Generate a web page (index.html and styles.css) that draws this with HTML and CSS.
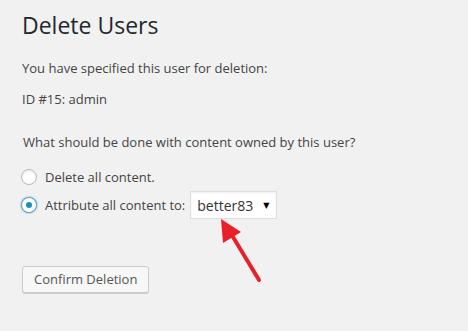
FILE: index.html
```html
<!DOCTYPE html>
<html>
<head>
<meta charset="utf-8">
<link rel="stylesheet" href="styles.css">
</head>
<body>
<div class="wrap">
  <h1 class="title">Delete Users</h1>
  <p class="text first">You have specified this user for deletion:</p>
  <p class="text">ID #15: admin</p>
  <fieldset class="options">
    <p class="text legend">What should be done with content owned by this user?</p>
    <div class="choice">
      <span class="radio"></span>
      <span class="label">Delete all content.</span>
    </div>
    <div class="choice">
      <span class="radio checked"></span>
      <span class="label">Attribute all content to:</span>
      <span class="select"><span class="select-text">better83</span><span class="caret">&#9660;</span></span>
    </div>
  </fieldset>
  <div class="actions">
    <span class="button">Confirm Deletion</span>
  </div>
</div>
<svg class="arrow" width="468" height="331" viewBox="0 0 468 331">
  <line x1="259" y1="280" x2="230" y2="232" stroke="#e8202a" stroke-width="4" stroke-linecap="round"/>
  <polygon points="221,219 241,232 223,243" fill="#e8202a"/>
</svg>
</body>
</html>
```
FILE: styles.css
```css
html, body {
  margin: 0;
  padding: 0;
  background: #f1f1f1;
}
body {
  font-family: "Open Sans", "Liberation Sans", sans-serif;
  font-size: 13px;
  color: #444;
  width: 468px;
  height: 331px;
  overflow: hidden;
  position: relative;
}
.wrap {
  padding: 10px 22px 0 22px;
}
.title {
  margin: 0;
  font-size: 23px;
  font-weight: 400;
  line-height: 30px;
  color: #23282d;
}
.text {
  margin: 0;
  line-height: 19px;
}
.first {
  margin-top: 19px;
}
.text + .text {
  margin-top: 12px;
}
.options {
  border: 0;
  margin: 24px 0 0 0;
  padding: 0;
}
.legend {
  margin-bottom: 11px;
  padding-left: 1px;
}
.choice {
  display: flex;
  align-items: center;
  height: 28px;
  margin-left: -1px;
}
.radio {
  box-sizing: border-box;
  width: 16px;
  height: 16px;
  border-radius: 50%;
  border: 1px solid #b4b9be;
  background: #fff;
  box-shadow: inset 0 1px 2px rgba(0,0,0,.1);
  margin-right: 8px;
  display: flex;
  align-items: center;
  justify-content: center;
}
.radio.checked {
  border-color: #5b9dd9;
  box-shadow: 0 0 2px rgba(30,140,190,.8);
}
.radio.checked::after {
  content: "";
  width: 6px;
  height: 6px;
  border-radius: 50%;
  background: #1e8cbe;
}
.label {
  line-height: 19px;
}
.select {
  box-sizing: border-box;
  margin-left: 5px;
  width: 87px;
  height: 28px;
  background: #fff;
  border: 1px solid #ddd;
  box-shadow: inset 0 1px 2px rgba(0,0,0,.07);
  display: flex;
  align-items: center;
  justify-content: space-between;
  padding: 0 7px 0 6px;
  color: #333;
}
.select-text {
  font-size: 14px;
}
.caret {
  font-family: "DejaVu Sans", sans-serif;
  font-size: 8px;
  color: #000;
}
.actions {
  margin-top: 47px;
}
.button {
  display: inline-block;
  box-sizing: border-box;
  height: 27px;
  line-height: 25px;
  padding: 0 11px;
  background: #f7f7f7;
  border: 1px solid #ccc;
  border-radius: 3px;
  box-shadow: 0 1px 0 #ccc;
  color: #555;
  font-size: 13px;
}
.arrow {
  position: absolute;
  left: 0;
  top: 0;
  pointer-events: none;
}
```
